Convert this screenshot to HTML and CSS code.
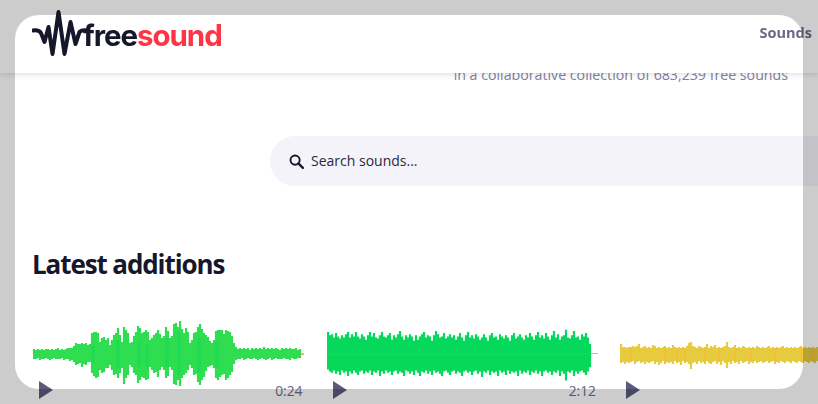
FILE: index.html
```html
<!DOCTYPE html>
<html lang="en">
<head>
<meta charset="utf-8">
<title>Freesound</title>
<link rel="stylesheet" href="styles.css">
</head>
<body>
<div class="page">
  <header class="topbar">
    <a class="logo">
      <svg class="logo-wave" viewBox="0 0 56 50" width="56" height="50">
        <path d="M1 21.500 C4.500 21 7.500 21.500 9 24 L12.500 33 L16.500 18 L20.500 45 L26.500 3 L32.500 45 L38.500 13 L43.500 35 L47.500 23 C49.500 21 52 21 55 21.500" fill="none" stroke="#17172b" stroke-width="4" stroke-linecap="round" stroke-linejoin="round"/>
      </svg>
      <span class="logo-text"><span class="logo-free">free</span><span class="logo-sound">sound</span></span>
    </a>
    <nav class="nav"><a class="nav-link">Sounds</a></nav>
  </header>
  <section class="hero">
    <p class="tagline">in a collaborative collection of 683,239 free sounds</p>
    <div class="search">
      <svg class="search-icon" viewBox="0 0 16 16" width="15" height="15">
        <circle cx="6.500" cy="6.500" r="4.900" fill="none" stroke="#17172b" stroke-width="2"/>
        <path d="M10 10 L14.800 14.800" stroke="#17172b" stroke-width="2.400" stroke-linecap="round"/>
      </svg>
      <span class="search-text">Search sounds...</span>
    </div>
  </section>
  <h1 class="section-title">Latest additions</h1>
  <section class="sounds">
    <article class="sound">
      <svg class="wave" viewBox="0 0 271 70" width="271" height="70">
        <path class="bars-green" d="M1 31V41M3 32V41M5 31V40M7 32V42M9 31V41M11 32V41M13 31V40M15 31V41M17 32V42M19 31V41M21 32V40M23 31V41M25 30V41M27 32V41M29 31V40M31 32V42M33 31V41M35 30V41M37 30V43M39 30V42M41 28V44M43 25V47M45 26V46M47 26V45M49 25V49M51 26V46M53 25V47M55 27V44M57 26V44M59 15V55M61 14V58M63 14V60M65 15V59M67 24V52M69 20V55M71 19V54M73 22V50M75 20V50M77 27V47M79 22V52M81 17V57M83 15V56M85 10V60M87 17V55M89 24V50M91 9V66M93 12V60M95 15V57M97 25V47M99 24V49M101 18V55M103 14V57M105 8V65M107 10V62M109 15V59M111 14V60M113 12V62M115 14V61M117 22V49M119 20V52M121 17V55M123 15V54M125 12V59M127 16V52M129 20V49M131 18V52M133 9V60M135 13V58M137 20V49M139 18V52M141 6V66M143 5V67M145 9V62M147 3V68M149 11V60M151 15V57M153 10V55M155 14V52M157 25V47M159 22V50M161 15V57M163 14V56M165 9V64M167 6V67M169 11V62M171 15V59M173 17V53M175 19V49M177 23V48M179 25V47M181 22V50M183 13V60M185 12V62M187 12V59M189 12V57M191 16V56M193 12V62M195 13V60M197 14V57M199 18V54M201 25V46M203 29V42M205 31V41M207 30V41M209 31V40M211 30V42M213 31V41M215 30V40M217 32V41M219 30V41M221 31V40M223 30V41M225 31V42M227 30V41M229 31V40M231 29V41M233 31V42M235 30V41M237 31V40M239 30V42M241 31V41M243 30V40M245 31V41M247 32V41M249 30V41M251 31V40M253 30V41M255 31V41M257 30V42M259 31V40M261 31V41M263 30V41M265 32V40M267 31V40"/>
        <path class="core-green" d="M60 28V45M85 22V50M106 24V48M114 26V48M134 20V50M146 14V58M166 20V54M184 24V50"/>
        <rect class="wave-tip" x="268" y="35" width="3" height="2"/>
      </svg>
      <div class="sound-controls">
        <svg class="play" viewBox="0 0 14 18" width="14" height="18"><polygon points="0,0 14,9 0,18"/></svg>
        <span class="duration">0:24</span>
      </div>
    </article>
    <article class="sound">
      <svg class="wave" viewBox="0 0 271 70" width="271" height="70">
        <path class="bars-emerald" transform="translate(0 -3.6) scale(1 1.1)" d="M1 16V50M3 19V52M5 18V53M7 21V51M9 17V54M11 20V52M13 22V55M15 19V51M17 21V53M19 18V52M21 16V56M23 21V52M25 18V54M27 20V51M29 16V53M31 20V55M33 22V52M35 18V51M37 20V54M39 23V52M41 19V53M43 16V51M45 20V55M47 17V52M49 21V53M51 22V51M53 19V56M55 16V52M57 20V54M59 21V51M61 19V53M63 17V52M65 23V55M67 19V52M69 21V51M71 18V54M73 15V52M75 20V53M77 23V56M79 19V51M81 21V52M83 18V54M85 20V52M87 24V55M89 19V51M91 23V53M93 20V56M95 18V52M97 16V53M99 21V51M101 19V54M103 20V52M105 24V55M107 19V51M109 15V53M111 18V52M113 21V54M115 20V56M117 17V52M119 22V51M121 20V53M123 18V55M125 21V52M127 19V51M129 23V54M131 20V52M133 17V53M135 21V56M137 24V52M139 19V51M141 16V53M143 21V52M145 19V55M147 22V52M149 18V51M151 20V54M153 23V52M155 21V57M157 18V52M159 21V53M161 24V51M163 19V55M165 17V52M167 21V53M169 20V52M171 23V56M173 18V51M175 20V53M177 22V52M179 19V55M181 21V51M183 24V54M185 19V52M187 17V53M189 22V52M191 20V56M193 18V51M195 21V54M197 23V52M199 19V53M201 21V51M203 17V55M205 20V52M207 23V53M209 19V51M211 16V54M213 21V52M215 19V56M217 22V52M219 17V51M221 20V53M223 23V52M225 19V55M227 15V52M229 21V53M231 18V51M233 23V56M235 20V52M237 19V54M239 14V60M241 21V52M243 22V53M245 19V51M247 15V56M249 21V52M251 20V54M253 23V52M255 18V51M257 20V53M259 17V55M261 21V52M263 27V48"/>
        <path class="core-emerald" d="M1 36H262"/>
        <rect class="wave-tip" x="264" y="35" width="7" height="1"/>
      </svg>
      <div class="sound-controls">
        <svg class="play" viewBox="0 0 14 18" width="14" height="18"><polygon points="0,0 14,9 0,18"/></svg>
        <span class="duration">2:12</span>
      </div>
    </article>
    <article class="sound sound-cut">
      <svg class="wave" viewBox="0 0 271 70" width="271" height="70">
        <path class="bars-yellow" d="M1 26V45M3 29V44M5 29V46M7 30V44M9 29V45M11 29V44M13 28V43M15 29V46M17 28V44M19 26V43M21 30V45M23 29V44M25 28V46M27 30V44M29 29V45M31 30V44M33 27V43M35 28V46M37 30V44M39 29V47M41 30V45M43 29V43M45 28V46M47 30V44M49 29V45M51 30V44M53 27V46M55 29V43M57 30V45M59 29V44M61 30V47M63 29V43M65 30V45M67 28V44M69 25V46M71 24V51M73 28V45M75 29V44M77 30V46M79 28V43M81 29V45M83 30V44M85 29V46M87 26V43M89 30V45M91 28V46M93 29V44M95 27V43M97 30V46M99 29V44M101 30V47M103 29V43M105 28V45M107 24V50M109 29V44M111 30V46M113 29V43M115 27V45M117 30V44M119 29V46M121 30V43M123 28V45M125 29V44M127 30V43M129 29V46M131 30V44M133 29V45M135 30V43M137 28V45M139 29V44M141 30V43M143 29V45M145 30V44M147 29V43M149 28V45M151 30V44M153 29V43M155 30V46M157 29V44M159 30V45M161 29V43M163 28V44M165 30V45M167 29V43M169 30V44M171 29V45M173 30V43M175 29V44M177 30V45M179 29V43M181 28V44M183 30V45M185 29V43M187 30V44M189 29V45M191 30V43M193 29V44M195 30V45M197 29V43M199 29V44"/>
        <path class="stripes-yellow" d="M11 30V43M45 29V45M57 30V44M65 30V44M85 30V44M99 30V44M115 30V43M131 30V43M155 30V44M181 30V43M192 30V43"/>
      </svg>
      <div class="sound-controls">
        <svg class="play" viewBox="0 0 14 18" width="14" height="18"><polygon points="0,0 14,9 0,18"/></svg>
      </div>
    </article>
  </section>
</div>
<div class="frame"></div>
</body>
</html>
```
FILE: styles.css
```css
* { box-sizing: border-box; }
html, body { margin: 0; height: 404px; overflow: hidden; background: #fff; }
body { font-family: "Open Sans", "Noto Sans", sans-serif; color: #17172b; }
.page { width: 818px; height: 404px; overflow: hidden; }
.topbar {
  position: fixed; top: 0; left: 0; right: 0; height: 73px; z-index: 2;
  background: #fff; box-shadow: 0 1px 6px rgba(40, 40, 90, .16);
  display: flex; align-items: flex-start; justify-content: space-between;
  padding: 9px 6px 0 32px;
}
.logo { display: flex; align-items: flex-start; }
.logo-wave { display: block; flex: none; }
.logo-text {
  font-family: "Inter", sans-serif; font-size: 29.500px; font-weight: 700;
  letter-spacing: -1.050px; line-height: 36px; margin: 8px 0 0 -5px;
}
.logo-free { color: #17172b; }
.logo-sound { color: #ff3546; }
.nav { padding-top: 14px; }
.nav-link { font-size: 14.500px; font-weight: 700; color: #6c6885; line-height: 20px; display: block; }
.hero { padding-top: 65px; }
.tagline {
  margin: 0; width: 788px; text-align: right;
  font-size: 14.200px; line-height: 20px; color: #81809a;
}
.search {
  margin: 51px 0 0 270px; height: 50px; border-radius: 25px 0 0 25px;
  background: #f3f3f9; display: flex; align-items: center; padding-left: 19px; gap: 7px;
}
.search-icon { flex: none; }
.search-text { font-size: 14px; color: #2a2a40; margin-top: -2px; }
.section-title {
  margin: 58px 0 0 32px; font-size: 26px; line-height: 40px; font-weight: 700;
  letter-spacing: -1.100px; color: #17172b;
}
.sounds { display: flex; gap: 22.500px; margin: 34px 0 0 33px; overflow: hidden; }
.sound { flex: none; width: 271px; }
.sound-cut { flex: 1 1 0; width: auto; min-width: 0; }
.wave { display: block; }
.bars-green { stroke: #2edd50; stroke-width: 2.200; fill: none; }
.core-green { stroke: #12db56; stroke-width: 3; fill: none; opacity: .6; }
.bars-emerald { stroke: #05d85a; stroke-width: 2.200; fill: none; }
.core-emerald { stroke: #18dc52; stroke-width: 1; fill: none; }
.bars-yellow { stroke: #e6cb3e; stroke-width: 2.200; fill: none; }
.stripes-yellow { stroke: #f6bf38; stroke-width: 2; fill: none; }
.wave-tip { fill: #f8b84a; }
.sound-controls { display: flex; justify-content: space-between; align-items: flex-start; padding: 0 1.500px 0 6px; margin-top: -7px; }
.play { display: block; fill: #5b5a7c; }
.duration { font-size: 13.800px; line-height: 20px; color: #6c6885; }
.frame {
  position: fixed; left: 15px; top: 15px; width: 788px; height: 374px; z-index: 3;
  border-radius: 24px; box-shadow: 0 0 0 1000px rgba(0, 0, 0, .2); pointer-events: none;
}
```
